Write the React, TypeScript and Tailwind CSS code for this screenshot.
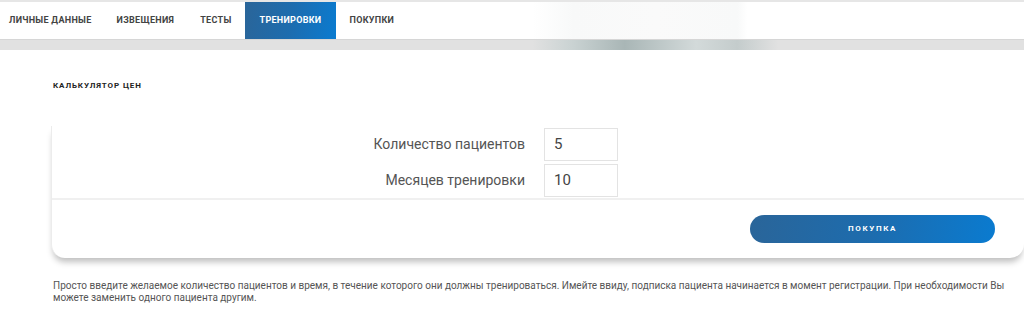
export default function App() {
  const tabs = ['Личные данные', 'Извещения', 'Тесты', 'Тренировки', 'Покупки']
  const active = 'Тренировки'

  return (
    <div className="h-[316px] w-[1024px] overflow-hidden bg-white font-['Roboto','Liberation_Sans',sans-serif]">
      {/* top nav */}
      <div className="h-[2px] bg-[#e6e6e6]" />
      <nav className="flex h-[37px] items-stretch bg-[linear-gradient(90deg,#ffffff_0%,#ffffff_52%,#f8f9f9_56%,#fafafa_64%,#f8f9f9_72%,#ffffff_73%,#ffffff_100%)]">
        <div className="flex items-stretch pl-[9px]">
          {tabs.map((t, i) => (
            <div
              key={t}
              className={
                t === active
                  ? 'flex items-center bg-[linear-gradient(100deg,#2a6599_0%,#1d6cae_50%,#0a7bd0_100%)] px-[15px] text-[9px] font-bold uppercase tracking-[0.3px] text-white'
                  : i === 0
                    ? 'flex items-center pr-[12px] text-[9px] font-bold uppercase tracking-[0.3px] text-[#444]'
                    : 'flex items-center px-[13px] text-[9px] font-bold uppercase tracking-[0.3px] text-[#444]'
              }
            >
              {t}
            </div>
          ))}
        </div>
      </nav>
      <div className="h-px bg-[#d6d6d6]" />
      <div className="h-[10px] bg-[linear-gradient(90deg,#e1e1e1_0%,#e1e1e1_52%,#c9d2d2_56%,#a9b6b6_61%,#d3dada_68%,#c4cccc_72%,#e1e1e1_76%,#e1e1e1_100%)]" />

      <main className="pl-[51px]">
        <h2 className="pl-[2px] pt-[30px] text-[8px] font-bold uppercase tracking-[0.9px] text-[#222]">
          Калькулятор цен
        </h2>

        {/* calculator card */}
        <section className="mt-[34px] w-[973px] rounded-b-[14px] border-l border-[#ececec] bg-white shadow-[0_6px_6px_-2px_rgba(0,0,0,0.25)]">
          <div className="flex flex-col gap-[3px] pt-[2px]">
            <div className="flex items-center">
              <label className="w-[473px] text-right text-[14px] text-[#555]">Количество пациентов</label>
              <div className="ml-[19px] flex h-[33px] w-[74px] items-center border border-[#e3e3e3] pl-[9px] text-[15px] text-[#444]">
                5
              </div>
            </div>
            <div className="flex items-center">
              <label className="w-[473px] text-right text-[14px] text-[#555]">Месяцев тренировки</label>
              <div className="ml-[19px] flex h-[33px] w-[74px] items-center border border-[#e3e3e3] pl-[9px] text-[15px] text-[#444]">
                10
              </div>
            </div>
          </div>
          <div className="mt-px h-[2px] bg-[#f0f0f0]" />
          <div className="flex justify-end pb-[15px] pl-[4px] pr-[29px] pt-[15px]">
            <button className="h-[28px] w-[245px] rounded-full bg-[linear-gradient(100deg,#2a6599_0%,#1d6cae_50%,#0a7bd0_100%)] text-[8px] font-bold uppercase tracking-[1.6px] text-white">
              Покупка
            </button>
          </div>
        </section>

        <p className="mt-[22px] w-[960px] pl-[2px] text-[10px] leading-[12px] text-[#555]">
          Просто введите желаемое количество пациентов и время, в течение которого они должны тренироваться. Имейте ввиду,
          подписка пациента начинается в момент регистрации. При необходимости Вы можете заменить одного пациента другим.
        </p>
      </main>
    </div>
  )
}
